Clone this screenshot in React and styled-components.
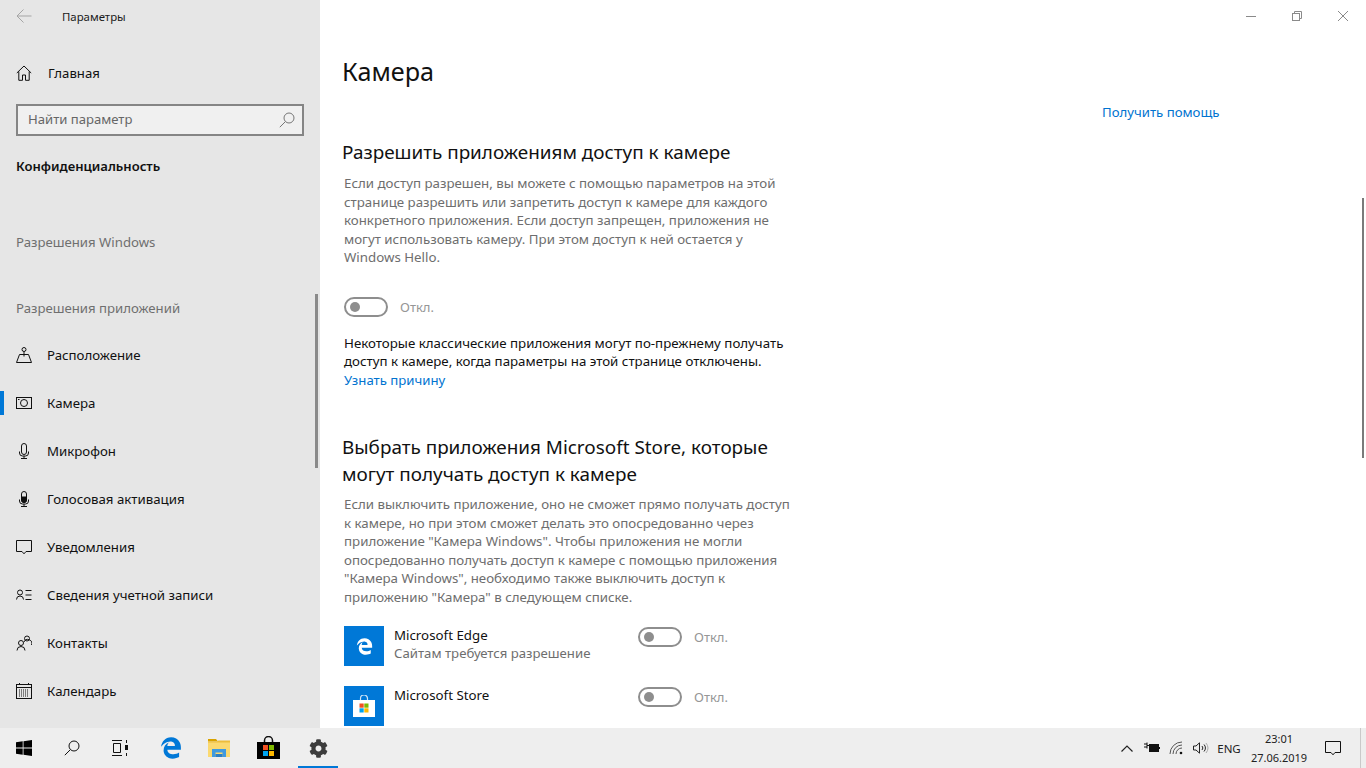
import React from 'react';
import styled, { createGlobalStyle } from 'styled-components';
import { FaEdgeLegacy, FaCog } from 'react-icons/fa';

const GlobalStyle = createGlobalStyle`
  html, body { margin:0; padding:0; height:100%; overflow:hidden; background:#fff; }
  #root { height:100%; }
  * { box-sizing:border-box; }
`;

const FONT = `'Noto Sans','Open Sans',sans-serif`;

const Page = styled.div`
  width:1366px;
  height:768px;
  display:flex;
  flex-direction:column;
  font-family:${FONT};
  overflow:hidden;
`;
const Window = styled.div`
  height:728px;
  display:flex;
  overflow:hidden;
`;

/* sidebar */
const Sidebar = styled.aside`
  position:relative;
  width:320px;
  flex:none;
  background:#e6e6e6;
  display:flex;
  flex-direction:column;
  overflow:hidden;
`;
const AppBar = styled.div`
  height:32px;
  display:flex;
  align-items:center;
  padding-left:16px;
  gap:30px;
  font-size:11.4px;
  color:#1a1a1a;
`;
const HomeRow = styled.div`
  height:48px;
  margin-top:17px;
  display:flex;
  align-items:center;
  padding-left:16px;
  gap:16px;
  font-size:13.2px;
  color:#111;
`;
const SearchBox = styled.div`
  margin:7px 16px 0;
  height:32px;
  border:2px solid #858585;
  background:#f0f0f0;
  display:flex;
  align-items:center;
  justify-content:space-between;
  padding:0 7px 0 10px;
  font-size:13.1px;
  color:#666;
`;
const SearchLabel = styled.span`
  padding-bottom:2px;
`;
const SectionTitle = styled.div`
  margin-top:21px;
  height:18px;
  line-height:18px;
  padding-left:16px;
  font-size:13.05px;
  font-weight:600;
  color:#111;
`;
const GroupLabel = styled.div`
  margin-top:${p => p.$top}px;
  height:20px;
  line-height:20px;
  padding-left:16px;
  font-size:13.2px;
  color:#6f6f6f;
`;
const NavList = styled.nav`
  margin-top:13px;
  display:flex;
  flex-direction:column;
`;
const NavItem = styled.div`
  position:relative;
  height:48px;
  display:flex;
  align-items:center;
  padding-left:16px;
  gap:15px;
  font-size:13.25px;
  color:#111;
  &::before {
    content:'';
    display:${p => (p.$active ? 'block' : 'none')};
    position:absolute;
    left:0;
    top:12px;
    width:4px;
    height:24px;
    background:#0078d7;
  }
`;
const NavIcon = styled.span`
  width:16px;
  height:16px;
  flex:none;
  display:flex;
  svg { display:block; }
`;
const SideThumb = styled.div`
  position:absolute;
  right:2px;
  top:294px;
  width:3px;
  height:174px;
  background:#8a8a8a;
`;

/* main pane */
const Main = styled.main`
  position:relative;
  flex:1;
  display:flex;
  flex-direction:column;
  background:#fff;
  overflow:hidden;
`;
const TitleBar = styled.div`
  height:32px;
  flex:none;
  display:flex;
  justify-content:flex-end;
`;
const WinButton = styled.div`
  width:46px;
  display:flex;
  align-items:center;
  justify-content:center;
`;
const Body = styled.div`
  display:flex;
  padding-left:22px;
`;
const Content = styled.div`
  width:760px;
  flex:none;
`;
const Title = styled.h1`
  margin:20px 0 0;
  font-size:25.2px;
  line-height:38px;
  font-weight:400;
  color:#111;
`;
const Heading = styled.h2`
  margin:${p => p.$top}px 0 0;
  width:450px;
  font-size:18.9px;
  line-height:27px;
  font-weight:400;
  color:#111;
`;
const Paragraph = styled.p`
  margin:${p => p.$top}px 0 0 2px;
  width:450px;
  font-size:13.3px;
  line-height:18.5px;
  color:${p => (p.$dark ? '#111' : '#6e6e6e')};
`;
const LinkText = styled.a`
  display:block;
  margin-left:2px;
  font-size:13.2px;
  line-height:18.5px;
  color:#0073d0;
`;
const HelpLink = styled.a`
  margin-top:70px;
  font-size:13.2px;
  line-height:20px;
  height:20px;
  white-space:nowrap;
  color:#0073d0;
`;
const ToggleRow = styled.div`
  margin:${p => p.$top || 0}px 0 0 ${p => p.$left || 0}px;
  height:20px;
  display:flex;
  align-items:center;
  gap:12px;
  font-size:13px;
  color:#969696;
`;
const Track = styled.span`
  width:44px;
  height:20px;
  border:2px solid #8e8e8e;
  border-radius:10px;
  display:flex;
  align-items:center;
  padding-left:4px;
  &::after {
    content:'';
    width:10px;
    height:10px;
    border-radius:50%;
    background:#8e8e8e;
  }
`;
const AppList = styled.div`
  margin:20px 0 0 2px;
  display:flex;
  flex-direction:column;
  gap:20px;
`;
const AppRow = styled.div`
  display:flex;
  width:400px;
  height:40px;
`;
const AppTile = styled.div`
  width:40px;
  height:40px;
  flex:none;
  background:#0078d7;
  display:flex;
  align-items:center;
  justify-content:center;
  color:#fff;
`;
const AppText = styled.div`
  width:244px;
  margin-left:10px;
  flex:none;
`;
const AppName = styled.div`
  font-size:13.3px;
  line-height:18px;
  color:#111;
`;
const AppSub = styled.div`
  font-size:13.2px;
  line-height:18px;
  color:#6e6e6e;
`;
const MainThumb = styled.div`
  position:absolute;
  right:2px;
  top:198px;
  width:2px;
  height:260px;
  background:#7a7a7a;
`;

/* taskbar */
const Taskbar = styled.footer`
  height:40px;
  flex:none;
  background:#eeeeee;
  display:flex;
  align-items:stretch;
`;
const TaskSlot = styled.div`
  width:48px;
  margin-left:${p => p.$gap || 0}px;
  display:flex;
  align-items:center;
  justify-content:center;
  position:relative;
  &::after {
    content:'';
    display:${p => (p.$running ? 'block' : 'none')};
    position:absolute;
    left:4px;
    right:4px;
    bottom:0;
    height:2px;
    background:#0078d7;
  }
`;
const Tray = styled.div`
  margin-left:auto;
  display:flex;
  align-items:center;
  color:#222;
`;
const TrayIcon = styled.div`
  width:${p => p.$w || 24}px;
  margin-left:${p => p.$gap || 0}px;
  display:flex;
  align-items:center;
  justify-content:center;
`;
const LangText = styled.div`
  width:32px;
  text-align:center;
  font-size:11.5px;
`;
const Clock = styled.div`
  width:68px;
  text-align:center;
  font-size:11px;
  line-height:19px;
`;
const ShowDesktop = styled.div`
  width:6px;
  height:100%;
  margin-left:19px;
  border-left:1px solid #c9c9c9;
`;

const S = { fill: 'none', stroke: '#111', strokeWidth: 1 };

const HomeIcon = () => (
  <svg width="16" height="16" viewBox="0 0 16 16" {...S}><path d="M.8 8 8 1l7.2 7M2.800 6.500v8.800h3.700V10h3v5.300h3.700V6.500" /></svg>
);
const LocationIcon = () => (
  <svg width="16" height="16" viewBox="0 0 16 16" {...S}><circle cx="8" cy="2.500" r="2" /><path d="M8 4.500v5M.5 15.500 3.500 7.500H12.500l3 8Z" /></svg>
);
const CameraIcon = () => (
  <svg width="16" height="16" viewBox="0 0 16 16" {...S}><rect x=".5" y="2.500" width="15" height="11" /><circle cx="8" cy="8" r="3.500" /><path d="M2 4.500h1.500" /></svg>
);
const MicIcon = () => (
  <svg width="16" height="16" viewBox="0 0 16 16" {...S}><rect x="5.500" y=".5" width="5" height="11" rx="2.500" /><path d="M3.500 8.500v1.500a3 3 0 0 0 3 3h3a3 3 0 0 0 3-3V8.500M8 13v2.500M5 15.500h6" /></svg>
);
const VoiceIcon = () => (
  <svg width="16" height="16" viewBox="0 0 16 16" {...S}><rect x="5.500" y=".5" width="5" height="11" rx="2.500" /><path d="M5.500 6h5v3a2.500 2.500 0 0 1-5 0Z" fill="#111" /><path d="M3.500 8.500v1.500a3 3 0 0 0 3 3h3a3 3 0 0 0 3-3V8.500M8 13v2.500M5 15.500h6" /></svg>
);
const BubbleIcon = ({ w = 16, h = 16 }) => (
  <svg width={w} height={h} viewBox="0 0 16 16" {...S}><path d="M.5 1.500h15v11h-5.500L8 14.800 6 12.500H.5Z" /></svg>
);
const AccountIcon = () => (
  <svg width="16" height="16" viewBox="0 0 16 16" {...S}><circle cx="4" cy="5.500" r="2.500" /><path d="M.5 12.500a3.500 3.500 0 0 1 7 0M9.500 3.500h6M9.500 8h6M9.500 12.500h6" /></svg>
);
const ContactsIcon = () => (
  <svg width="16" height="16" viewBox="0 0 16 16" {...S}><circle cx="5" cy="8" r="2.500" /><path d="M1 15.500a4 4 0 0 1 8 0" /><circle cx="11" cy="3.500" r="2.500" /><path d="M8 7a4 4 0 0 1 7.500 3" /></svg>
);
const CalendarIcon = () => (
  <svg width="16" height="16" viewBox="0 0 16 16" {...S}>
    <rect x=".5" y="1.500" width="15" height="14" />
    <path d="M.5 4.500h15M3.500 0v2M12.500 0v2" />
    <path d="M3 7h10M3 9h10M3 11h10M3 13h10" strokeDasharray="1 1" />
  </svg>
);
const SearchIcon = ({ size = 16, color = '#767676' }) => (
  <svg width={size} height={size} viewBox="0 0 16 16" fill="none" stroke={color} strokeWidth="1">
    <circle cx="10" cy="6" r="5" /><path d="M6.300 9.700.8 15.200" />
  </svg>
);
const WindowsLogo = () => (
  <svg width="16" height="16" viewBox="0 0 16 16" fill="#000">
    <path d="M0 2.300 6.700 1.300v6.200H0ZM7.500 1.200 16 0v7.500H7.500ZM0 8.400h6.700v6.300L0 13.700ZM7.500 8.400H16V16l-8.500-1.200Z" />
  </svg>
);
const TaskViewIcon = () => (
  <svg width="16" height="16" viewBox="0 0 16 16" fill="none" stroke="#111" strokeWidth="1">
    <path d="M0 .5h10M0 15.500h10M1.500 3.500h7v9h-7ZM14.500 0v3M14.500 13v3" />
    <rect x="13" y="5" width="3" height="5" fill="#111" stroke="none" />
  </svg>
);
const FolderIcon = () => (
  <svg width="22" height="18" viewBox="0 0 22 18">
    <path d="M0 0h8l2 2.500H0Z" fill="#d9a300" />
    <path d="M0 2.500h9L10.500 1.500H22V4H0Z" fill="#edbd3c" />
    <rect x="0" y="3.500" width="22" height="14.500" fill="#fbd970" />
    <path d="M4 18V10h14v8h-3.500v-4.500h-7V18Z" fill="#3f9ae0" />
    <rect x="7.500" y="15" width="7" height="3" fill="#2c7fc4" />
  </svg>
);
const StoreIcon = () => (
  <svg width="26" height="24" viewBox="0 0 26 24">
    <path d="M10.500 7V4.500a4 4 0 0 1 8 0V7" fill="none" stroke="#111" strokeWidth="1.500" />
    <rect x="3" y="6" width="23" height="17" fill="#000" />
    <rect x="9" y="9" width="5" height="5" fill="#f25022" />
    <rect x="15" y="9" width="5" height="5" fill="#7fba00" />
    <rect x="9" y="15" width="5" height="5" fill="#00a4ef" />
    <rect x="15" y="15" width="5" height="5" fill="#ffb900" />
  </svg>
);
const StoreTileIcon = () => (
  <svg width="22" height="22" viewBox="0 0 22 22">
    <path d="M7.500 6V3.500a3.500 3.500 0 0 1 7 0V6" fill="none" stroke="#cfe4f7" strokeWidth="1.200" />
    <rect x="0" y="5" width="22" height="17" fill="#fff" />
    <rect x="6.500" y="8.500" width="4.200" height="4.200" fill="#f25022" />
    <rect x="11.300" y="8.500" width="4.200" height="4.200" fill="#7fba00" />
    <rect x="6.500" y="13.300" width="4.200" height="4.200" fill="#00a4ef" />
    <rect x="11.300" y="13.300" width="4.200" height="4.200" fill="#ffb900" />
  </svg>
);

const navItems = [
  { label: 'Расположение', icon: <LocationIcon /> },
  { label: 'Камера', icon: <CameraIcon />, active: true },
  { label: 'Микрофон', icon: <MicIcon /> },
  { label: 'Голосовая активация', icon: <VoiceIcon /> },
  { label: 'Уведомления', icon: <BubbleIcon /> },
  { label: 'Сведения учетной записи', icon: <AccountIcon /> },
  { label: 'Контакты', icon: <ContactsIcon /> },
  { label: 'Календарь', icon: <CalendarIcon /> },
];

const Toggle = ({ top, left }) => (
  <ToggleRow $top={top} $left={left}><Track />Откл.</ToggleRow>
);

export default function App() {
  return (
    <Page>
      <GlobalStyle />
      <Window>
        <Sidebar>
          <AppBar>
            <svg width="16" height="16" viewBox="0 0 16 16" fill="none" stroke="#a5a5a5" strokeWidth="1"><path d="M15.500 8H1M7.500 1.500 1 8l6.500 6.500" /></svg>
            Параметры
          </AppBar>
          <HomeRow><NavIcon><HomeIcon /></NavIcon>Главная</HomeRow>
          <SearchBox><SearchLabel>Найти параметр</SearchLabel><SearchIcon /></SearchBox>
          <SectionTitle>Конфиденциальность</SectionTitle>
          <GroupLabel $top={57}>Разрешения Windows</GroupLabel>
          <GroupLabel $top={46}>Разрешения приложений</GroupLabel>
          <NavList>
            {navItems.map(item => (
              <NavItem key={item.label} $active={item.active}>
                <NavIcon>{item.icon}</NavIcon>{item.label}
              </NavItem>
            ))}
          </NavList>
          <SideThumb />
        </Sidebar>
        <Main>
          <TitleBar>
            <WinButton>
              <svg width="10" height="10" viewBox="0 0 10 10" stroke="#8a8a8a"><path d="M0 5.500h10" /></svg>
            </WinButton>
            <WinButton>
              <svg width="10" height="10" viewBox="0 0 10 10" fill="none" stroke="#8a8a8a"><rect x=".5" y="2.500" width="7" height="7" /><path d="M2.500 2.500v-2h7v7h-2" /></svg>
            </WinButton>
            <WinButton>
              <svg width="10" height="10" viewBox="0 0 10 10" stroke="#8a8a8a"><path d="m0 0 10 10M10 0 0 10" /></svg>
            </WinButton>
          </TitleBar>
          <Body>
            <Content>
              <Title>Камера</Title>
              <Heading $top={49}>Разрешить приложениям доступ к камере</Heading>
              <Paragraph $top={8}>
                Если доступ разрешен, вы можете с помощью параметров на этой странице разрешить или запретить доступ к камере для каждого конкретного приложения. Если доступ запрещен, приложения не могут использовать камеру. При этом доступ к ней остается у Windows Hello.
              </Paragraph>
              <Toggle top={30} left={2} />
              <Paragraph $top={17} $dark>
                Некоторые классические приложения могут по-прежнему получать доступ к камере, когда параметры на этой странице отключены.
              </Paragraph>
              <LinkText>Узнать причину</LinkText>
              <Heading $top={45}>Выбрать приложения Microsoft Store, которые могут получать доступ к камере</Heading>
              <Paragraph $top={7}>
                Если выключить приложение, оно не сможет прямо получать доступ к камере, но при этом сможет делать это опосредованно через приложение "Камера Windows". Чтобы приложения не могли опосредованно получать доступ к камере с помощью приложения "Камера Windows", необходимо также выключить доступ к приложению "Камера" в следующем списке.
              </Paragraph>
              <AppList>
                <AppRow>
                  <AppTile><FaEdgeLegacy size={17} /></AppTile>
                  <AppText>
                    <AppName>Microsoft Edge</AppName>
                    <AppSub>Сайтам требуется разрешение</AppSub>
                  </AppText>
                  <Toggle top={1} />
                </AppRow>
                <AppRow>
                  <AppTile><StoreTileIcon /></AppTile>
                  <AppText><AppName>Microsoft Store</AppName></AppText>
                  <Toggle top={1} />
                </AppRow>
              </AppList>
            </Content>
            <HelpLink>Получить помощь</HelpLink>
          </Body>
          <MainThumb />
        </Main>
      </Window>
      <Taskbar>
        <TaskSlot><WindowsLogo /></TaskSlot>
        <TaskSlot><SearchIcon size={16} color="#111" /></TaskSlot>
        <TaskSlot><TaskViewIcon /></TaskSlot>
        <TaskSlot $gap={3}><FaEdgeLegacy size={22} color="#0078d7" /></TaskSlot>
        <TaskSlot><FolderIcon /></TaskSlot>
        <TaskSlot><StoreIcon /></TaskSlot>
        <TaskSlot $gap={3} $running><FaCog size={19} color="#3c3c3c" /></TaskSlot>
        <Tray>
          <TrayIcon>
            <svg width="12" height="7" viewBox="0 0 12 7" fill="none" stroke="#222" strokeWidth="1.200"><path d="M.5 6.500 6 1l5.500 5.500" /></svg>
          </TrayIcon>
          <TrayIcon $w={26}>
            <svg width="16" height="12" viewBox="0 0 16 12" fill="none" stroke="#111"><path d="M0 2h3M0 5h3M3 .5v6M3 3.500h2" /><rect x="5.500" y="2.500" width="9" height="7" fill="#111" /><path d="M15.500 5v2" /></svg>
          </TrayIcon>
          <TrayIcon $w={24}>
            <svg width="16" height="14" viewBox="0 0 16 14" fill="none" stroke="#555"><path d="M1 13A12 12 0 0 1 13 1M4 13a9 9 0 0 1 9-9M7 13a6 6 0 0 1 6-6" /><circle cx="12" cy="12" r="1.300" fill="#111" stroke="none" /></svg>
          </TrayIcon>
          <TrayIcon $w={24}>
            <svg width="16" height="12" viewBox="0 0 16 12" fill="none" stroke="#222"><path d="M.5 4h2.500L6.500.8v10.400L3 8H.5Z" /><path d="M9 4a3 3 0 0 1 0 4M11 2.500a5 5 0 0 1 0 7" /><path d="M13 1a8 8 0 0 1 0 10" stroke="#aaa" /></svg>
          </TrayIcon>
          <LangText>ENG</LangText>
          <Clock>23:01<br />27.06.2019</Clock>
          <TrayIcon $w={16} $gap={12}><BubbleIcon /></TrayIcon>
          <ShowDesktop />
        </Tray>
      </Taskbar>
    </Page>
  );
}
